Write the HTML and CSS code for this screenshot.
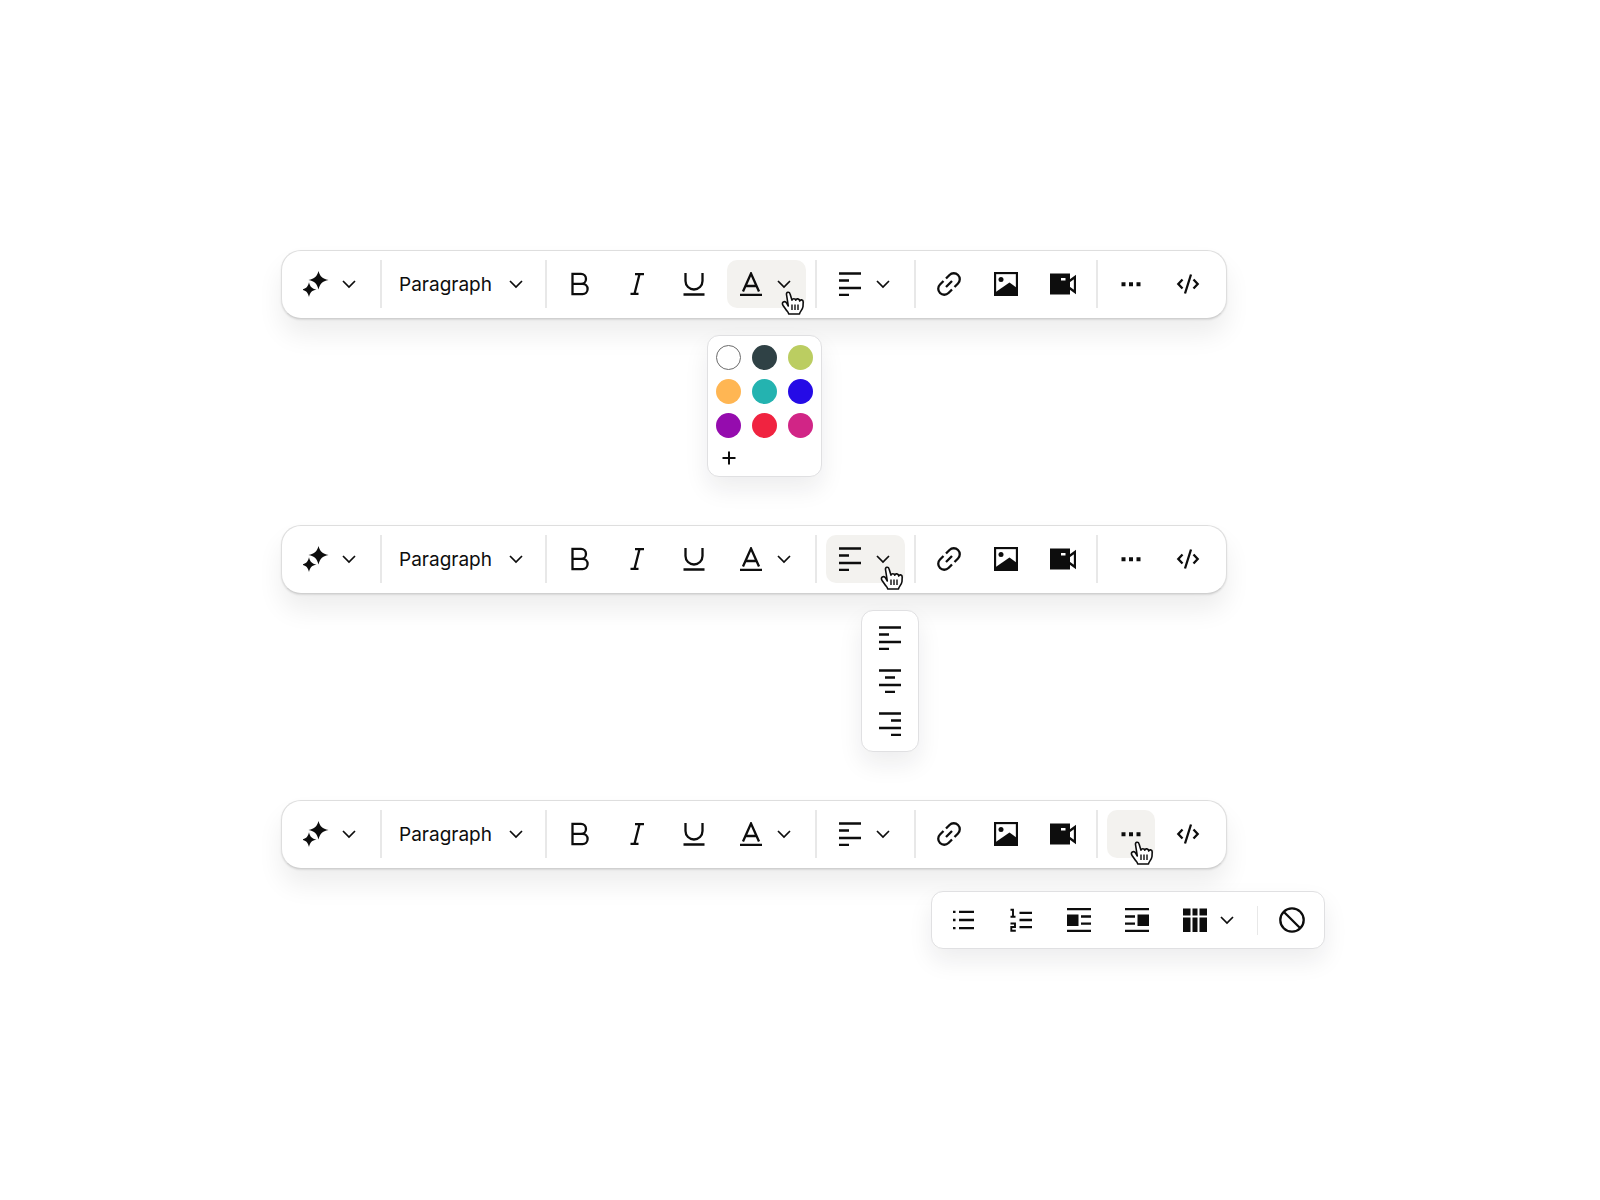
FILE: index.html
```
<!DOCTYPE html>
<html lang="en">
<head>
    <meta charset="UTF-8">
    <meta name="viewport" content="width=device-width, initial-scale=1.0">
    <title>Rich Text Editor Toolbar</title>
    <link rel="stylesheet" href="styles.css">
</head>
<body>

    <!-- Icon Sprite -->
    <svg class="sprite" aria-hidden="true">
        <symbol id="sparkle" viewBox="0 0 26 26">
            <path d="M15.500 0c1.600 5.500 3.700 7.700 10 9-6.300 1.400-8.400 3.600-10 9.500-1.600-5.900-3.700-8.100-10-9.500C11.800 7.700 13.900 5.500 15.500 0z" fill="currentColor" stroke="none"/>
            <path d="M6 11.300c1.200 4.700 2.900 6.400 7.500 7.300-4.600 1-6.300 2.700-7.500 7.400-1.200-4.700-2.900-6.400-7.500-7.400 4.600-.9 6.300-2.600 7.500-7.300z" fill="currentColor" stroke="none"/>
        </symbol>
        <symbol id="chevron" viewBox="0 0 14 14">
            <path d="M1 4l6 6 6-6"/>
        </symbol>
        <symbol id="bold" viewBox="0 0 24 24">
            <path d="M4.500 1.900h8.500a5 5 0 0 1 0 10H4.500zM4.500 11.900h10a5.100 5.100 0 0 1 0 10.200h-10z"/>
        </symbol>
        <symbol id="italic" viewBox="0 0 24 24">
            <path d="M10 2.200h9M5.500 21.800h8M14.500 2.200l-5 19.600"/>
        </symbol>
        <symbol id="underline" viewBox="0 0 24 24">
            <path d="M3.500 1v8a8.500 8.500 0 0 0 17 0V1M1.500 22.500h21"/>
        </symbol>
        <symbol id="text-color" viewBox="0 0 24 24">
            <path d="M4 19.500L12 1.500l8 18M6.500 14h11M1 23h22"/>
        </symbol>
        <symbol id="align-left" viewBox="0 0 24 24">
            <path d="M1 1.500h22M1 8.500h10M1 16h22M1 23h10"/>
        </symbol>
        <symbol id="align-center" viewBox="0 0 24 24">
            <path d="M1 1.500h22M7 8.500h10M1 16h22M7 23h10"/>
        </symbol>
        <symbol id="align-right" viewBox="0 0 24 24">
            <path d="M1 1.500h22M13 8.500h10M1 16h22M13 23h10"/>
        </symbol>
        <symbol id="link" viewBox="0 0 24 24">
            <path d="M9 6.500l3.500-3.500a6 6 0 0 1 8.500 8.500L17.500 15M15 17.500L11.500 21A6 6 0 0 1 3 12.500L6.500 9M9 15l6-6"/>
        </symbol>
        <symbol id="image" viewBox="0 0 24 24">
            <rect x="1" y="1" width="22" height="22"/>
            <circle cx="7" cy="7.500" r="2.500" fill="currentColor" stroke="none"/>
            <path d="M1 23v-2.500l14.500-10L23 16v7z" fill="currentColor" stroke="none"/>
        </symbol>
        <symbol id="video" viewBox="0 0 26 24">
            <path d="M0 1.500h20v21H0z" fill="currentColor" stroke="none"/>
            <path d="M11 6h4.500v2.500H11z" fill="#fff" stroke="none"/>
            <path d="M19.500 9l5.500-4v15l-5.500-4"/>
        </symbol>
        <symbol id="dots" viewBox="0 0 24 24">
            <path d="M2.500 10.200h4v4h-4zM10 10.200h4v4h-4zM17.500 10.200h4v4h-4z" fill="currentColor" stroke="none"/>
        </symbol>
        <symbol id="code" viewBox="0 0 24 24">
            <path d="M6.500 7.500L2.300 12l4.200 4.500M17.500 7.500l4.200 4.500-4.200 4.500M15 2.500L9 21.500"/>
        </symbol>
        <symbol id="list" viewBox="0 0 24 24">
            <path d="M2 3.800h2.500M8 3.800h15M2 12h2.500M8 12h15M2 20.200h2.500M8 20.200h15"/>
        </symbol>
        <symbol id="numbered" viewBox="0 0 24 24">
            <path d="M10.500 4.800H23M10.500 12H23M10.500 19.200H23"/>
            <path d="M1.500 1.700h2.500v7M1.500 8.800h5M1.500 15.500h4.500v3.500H2.300v3.700h4.500" stroke-width="1.900"/>
        </symbol>
        <symbol id="wrap-left" viewBox="0 0 24 24">
            <path d="M0 1.200h24M14 8.500h10M14 15.700h10M0 22.900h24"/>
            <path d="M0 6.500h11.500V18H0z" fill="currentColor" stroke="none"/>
        </symbol>
        <symbol id="wrap-right" viewBox="0 0 24 24">
            <path d="M0 1.200h24M0 8.500h10M0 15.700h10M0 22.900h24"/>
            <path d="M12.500 6.500H24V18H12.500z" fill="currentColor" stroke="none"/>
        </symbol>
        <symbol id="table" viewBox="0 0 24 24">
            <path d="M0 .5h7.500v7H0zM9.500 .5h5v7h-5zM16.500 .5H24v7h-7.500zM0 9.500h7.500V24H0zM9.500 9.500h5V24h-5zM16.500 9.500H24V24h-7.500z" fill="currentColor" stroke="none"/>
        </symbol>
        <symbol id="ban" viewBox="0 0 26 26">
            <circle cx="13" cy="13" r="11.700"/>
            <path d="M4.700 4.700l16.600 16.600"/>
        </symbol>
        <symbol id="plus" viewBox="0 0 14 14">
            <path d="M7 .5v13M.5 7h13"/>
        </symbol>
        <symbol id="hand" viewBox="0 0 24 24">
            <path d="M7.300 15L5.800 12.300C5 11 3.500 10.300 2.300 11c-1.300.8-1 2.300-.2 3.500l3.300 4.700c.7 1 2 1.800 2.300 3.800h10.800c.2-2.500 3.100-4 3.500-7.500l.2-4.500c.1-2.500-2.900-2.800-3.500-.9 0-2.600-3.400-3-4-.9-.4-2-3.300-2-3.700 0L9 2.800C8.400.5 5 .9 5.500 3.500z" fill="#fff" stroke-width="1.600" stroke-linejoin="round"/>
            <path d="M11 13.500v5.500M14 13.500v5.500M17 13.500v5.500" stroke-width="1.400"/>
        </symbol>
    </svg>

    <main class="editors">

        <!-- Toolbar: Text Color Open -->
        <div class="toolbar" role="toolbar" aria-label="Text color">
            <button class="tool tool-wide" type="button" aria-label="AI tools">
                <svg class="icon-large"><use href="#sparkle"/></svg>
                <svg class="chevron"><use href="#chevron"/></svg>
            </button>
            <span class="divider"></span>
            <label class="format">
                <select aria-label="Text format">
                    <option>Paragraph</option>
                    <option>Heading 1</option>
                    <option>Heading 2</option>
                </select>
                <svg class="chevron"><use href="#chevron"/></svg>
            </label>
            <span class="divider"></span>
            <button class="tool" type="button" aria-label="Bold"><svg><use href="#bold"/></svg></button>
            <button class="tool" type="button" aria-label="Italic"><svg><use href="#italic"/></svg></button>
            <button class="tool" type="button" aria-label="Underline"><svg><use href="#underline"/></svg></button>
            <div class="dropdown">
                <button class="tool tool-wide active" type="button" aria-label="Text color" aria-expanded="true">
                    <svg><use href="#text-color"/></svg>
                    <svg class="chevron"><use href="#chevron"/></svg>
                </button>
                <svg class="pointer"><use href="#hand"/></svg>
                <div class="menu color-menu">
                    <button class="swatch white" type="button" aria-label="White"></button>
                    <button class="swatch slate" type="button" aria-label="Slate"></button>
                    <button class="swatch lime" type="button" aria-label="Lime"></button>
                    <button class="swatch orange" type="button" aria-label="Orange"></button>
                    <button class="swatch teal" type="button" aria-label="Teal"></button>
                    <button class="swatch blue" type="button" aria-label="Blue"></button>
                    <button class="swatch purple" type="button" aria-label="Purple"></button>
                    <button class="swatch red" type="button" aria-label="Red"></button>
                    <button class="swatch pink" type="button" aria-label="Pink"></button>
                    <button class="add-color" type="button" aria-label="Add color"><svg><use href="#plus"/></svg></button>
                </div>
            </div>
            <span class="divider"></span>
            <button class="tool tool-wide" type="button" aria-label="Alignment">
                <svg><use href="#align-left"/></svg>
                <svg class="chevron"><use href="#chevron"/></svg>
            </button>
            <span class="divider"></span>
            <button class="tool" type="button" aria-label="Link"><svg><use href="#link"/></svg></button>
            <button class="tool" type="button" aria-label="Image"><svg><use href="#image"/></svg></button>
            <button class="tool" type="button" aria-label="Video"><svg class="icon-video"><use href="#video"/></svg></button>
            <span class="divider"></span>
            <button class="tool" type="button" aria-label="More"><svg><use href="#dots"/></svg></button>
            <button class="tool" type="button" aria-label="Code"><svg><use href="#code"/></svg></button>
        </div>

        <!-- Toolbar: Alignment Open -->
        <div class="toolbar" role="toolbar" aria-label="Alignment">
            <button class="tool tool-wide" type="button" aria-label="AI tools">
                <svg class="icon-large"><use href="#sparkle"/></svg>
                <svg class="chevron"><use href="#chevron"/></svg>
            </button>
            <span class="divider"></span>
            <label class="format">
                <select aria-label="Text format">
                    <option>Paragraph</option>
                    <option>Heading 1</option>
                    <option>Heading 2</option>
                </select>
                <svg class="chevron"><use href="#chevron"/></svg>
            </label>
            <span class="divider"></span>
            <button class="tool" type="button" aria-label="Bold"><svg><use href="#bold"/></svg></button>
            <button class="tool" type="button" aria-label="Italic"><svg><use href="#italic"/></svg></button>
            <button class="tool" type="button" aria-label="Underline"><svg><use href="#underline"/></svg></button>
            <button class="tool tool-wide" type="button" aria-label="Text color">
                <svg><use href="#text-color"/></svg>
                <svg class="chevron"><use href="#chevron"/></svg>
            </button>
            <span class="divider"></span>
            <div class="dropdown">
                <button class="tool tool-wide active" type="button" aria-label="Alignment" aria-expanded="true">
                    <svg><use href="#align-left"/></svg>
                    <svg class="chevron"><use href="#chevron"/></svg>
                </button>
                <svg class="pointer"><use href="#hand"/></svg>
                <div class="menu align-menu">
                    <button type="button" aria-label="Align left"><svg><use href="#align-left"/></svg></button>
                    <button type="button" aria-label="Align center"><svg><use href="#align-center"/></svg></button>
                    <button type="button" aria-label="Align right"><svg><use href="#align-right"/></svg></button>
                </div>
            </div>
            <span class="divider"></span>
            <button class="tool" type="button" aria-label="Link"><svg><use href="#link"/></svg></button>
            <button class="tool" type="button" aria-label="Image"><svg><use href="#image"/></svg></button>
            <button class="tool" type="button" aria-label="Video"><svg class="icon-video"><use href="#video"/></svg></button>
            <span class="divider"></span>
            <button class="tool" type="button" aria-label="More"><svg><use href="#dots"/></svg></button>
            <button class="tool" type="button" aria-label="Code"><svg><use href="#code"/></svg></button>
        </div>

        <!-- Toolbar: More Open -->
        <div class="toolbar" role="toolbar" aria-label="More tools">
            <button class="tool tool-wide" type="button" aria-label="AI tools">
                <svg class="icon-large"><use href="#sparkle"/></svg>
                <svg class="chevron"><use href="#chevron"/></svg>
            </button>
            <span class="divider"></span>
            <label class="format">
                <select aria-label="Text format">
                    <option>Paragraph</option>
                    <option>Heading 1</option>
                    <option>Heading 2</option>
                </select>
                <svg class="chevron"><use href="#chevron"/></svg>
            </label>
            <span class="divider"></span>
            <button class="tool" type="button" aria-label="Bold"><svg><use href="#bold"/></svg></button>
            <button class="tool" type="button" aria-label="Italic"><svg><use href="#italic"/></svg></button>
            <button class="tool" type="button" aria-label="Underline"><svg><use href="#underline"/></svg></button>
            <button class="tool tool-wide" type="button" aria-label="Text color">
                <svg><use href="#text-color"/></svg>
                <svg class="chevron"><use href="#chevron"/></svg>
            </button>
            <span class="divider"></span>
            <button class="tool tool-wide" type="button" aria-label="Alignment">
                <svg><use href="#align-left"/></svg>
                <svg class="chevron"><use href="#chevron"/></svg>
            </button>
            <span class="divider"></span>
            <button class="tool" type="button" aria-label="Link"><svg><use href="#link"/></svg></button>
            <button class="tool" type="button" aria-label="Image"><svg><use href="#image"/></svg></button>
            <button class="tool" type="button" aria-label="Video"><svg class="icon-video"><use href="#video"/></svg></button>
            <span class="divider"></span>
            <div class="dropdown">
                <button class="tool active" type="button" aria-label="More" aria-expanded="true"><svg><use href="#dots"/></svg></button>
                <svg class="pointer"><use href="#hand"/></svg>
                <div class="menu more-menu">
                    <button class="tool" type="button" aria-label="Bulleted list"><svg><use href="#list"/></svg></button>
                    <button class="tool" type="button" aria-label="Numbered list"><svg><use href="#numbered"/></svg></button>
                    <button class="tool" type="button" aria-label="Wrap left"><svg><use href="#wrap-left"/></svg></button>
                    <button class="tool" type="button" aria-label="Wrap right"><svg><use href="#wrap-right"/></svg></button>
                    <button class="tool tool-wide" type="button" aria-label="Table">
                        <svg><use href="#table"/></svg>
                        <svg class="chevron"><use href="#chevron"/></svg>
                    </button>
                    <span class="divider"></span>
                    <button class="tool" type="button" aria-label="Clear formatting"><svg class="icon-large"><use href="#ban"/></svg></button>
                </div>
            </div>
            <button class="tool" type="button" aria-label="Code"><svg><use href="#code"/></svg></button>
        </div>

    </main>
</body>
</html>
```

FILE: styles.css
```
* {
    box-sizing: border-box;
}

body {
    margin: 0;
    background: #fff;
    color: #0d0d0d;
    font-family: Inter, "Liberation Sans", sans-serif;
    font-size: 19px;
}

.sprite {
    display: none;
}

svg {
    display: block;
    flex-shrink: 0;
    width: 24px;
    height: 24px;
    fill: none;
    stroke: currentColor;
    stroke-width: 2.3;
    overflow: visible;
}

button {
    padding: 0;
    border: none;
    background: none;
    color: inherit;
    cursor: pointer;
}

.editors {
    display: flex;
    flex-direction: column;
    gap: 206px;
    width: fit-content;
    margin: 0 auto;
    padding: 250px 92px 250px 0;
}

/* Toolbar */
.toolbar {
    display: flex;
    gap: 9px;
    padding: 9px 14px 10px 10px;
    border: 1px solid #dedede;
    border-bottom-color: #d0d0d0;
    border-radius: 20px;
    background: #fff;
    box-shadow: 0 1px 2px rgba(0, 0, 0, 0.1), 0 16px 26px rgba(0, 0, 0, 0.07);
}

.tool {
    display: flex;
    align-items: center;
    justify-content: center;
    width: 48px;
    height: 48px;
    border-radius: 10px;
}

.tool-wide {
    justify-content: flex-start;
    gap: 14px;
    width: 79px;
    padding-left: 12px;
}

.active {
    background: #f3f2ef;
}

.tool .icon-large {
    width: 26px;
    height: 26px;
}

.tool-wide .icon-large {
    margin: 0 -1px;
}

.tool .icon-video {
    width: 26px;
}

.divider {
    width: 2px;
    background: #e8e8e8;
}

svg.chevron {
    width: 14px;
    height: 14px;
    stroke-width: 1.7;
}

/* Text Format */
.format {
    display: grid;
    align-items: center;
    width: 145px;
}

.format select,
.format .chevron {
    grid-area: 1 / 1;
}

.format select {
    height: 48px;
    padding: 0 0 0 8px;
    border: none;
    background: none;
    color: inherit;
    font: inherit;
    appearance: none;
}

.format .chevron {
    justify-self: end;
    margin-right: 13px;
    pointer-events: none;
}

/* Dropdown Menus */
.dropdown {
    position: relative;
}

.pointer {
    position: absolute;
    right: 1px;
    top: 31px;
    z-index: 2;
    pointer-events: none;
}

.menu {
    position: absolute;
    top: 75px;
    z-index: 1;
    border: 1px solid #e0e0e2;
    border-radius: 12px;
    background: #fff;
    box-shadow: 0 12px 24px rgba(20, 20, 40, 0.08);
}

.color-menu {
    right: -16px;
    display: grid;
    grid-template-columns: repeat(3, 25px);
    gap: 9px 11px;
    padding: 9px 8px 7px;
}

.swatch {
    width: 25px;
    height: 25px;
    border-radius: 50%;
}

.white { border: 1px solid #6b6b6b; background: #fff; }
.slate { background: #2f4145; }
.lime { background: #bbcd61; }
.orange { background: #ffb653; }
.teal { background: #24b3b0; }
.blue { background: #250be6; }
.purple { background: #950cae; }
.red { background: #f02340; }
.pink { background: #d12586; }

.add-color {
    display: grid;
    place-items: center;
    height: 22px;
}

.add-color svg {
    width: 14px;
    height: 14px;
    stroke-width: 2;
}

.align-menu {
    left: 35px;
    display: flex;
    flex-direction: column;
    gap: 19px;
    padding: 15px 16px;
}

.more-menu {
    top: 81px;
    right: -170px;
    display: flex;
    gap: 10px;
    padding: 4px 8px 4px 7px;
}

.more-menu .tool-wide {
    gap: 13px;
    width: 76px;
}

.more-menu .divider {
    width: 1px;
    height: 29px;
    align-self: center;
}
```
